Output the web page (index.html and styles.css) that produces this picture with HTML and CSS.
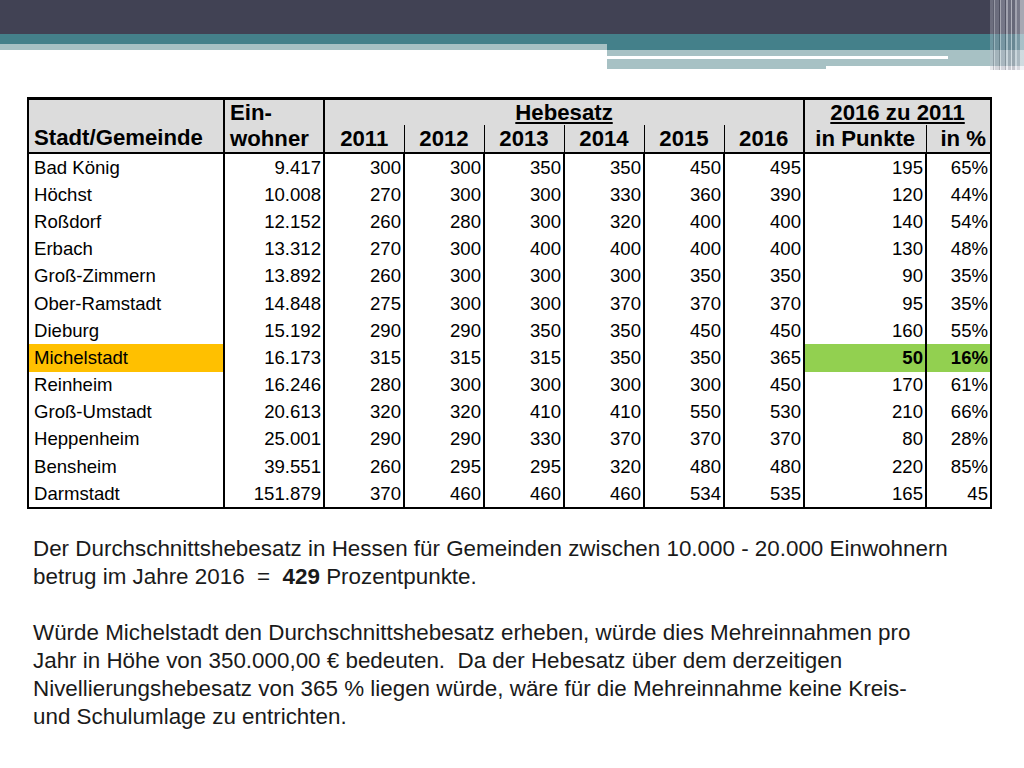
FILE: index.html
```html
<!DOCTYPE html>
<html lang="de">
<head>
<meta charset="utf-8">
<title>Hebesatz</title>
<link rel="stylesheet" href="styles.css">
</head>
<body>
<header class="deck">
  <div class="bar-dark"></div>
  <div class="band">
    <div class="band-left">
      <div class="teal short"></div>
      <div class="pale thin"></div>
    </div>
    <div class="band-right">
      <div class="teal tall"></div>
      <div class="pale p1"></div>
      <div class="line-row"><div class="white-line"></div></div>
      <div class="pale p2"></div>
      <div class="p3"></div>
    </div>
  </div>
  <div class="stripes"></div>
</header>

<main class="slide">
  <table class="rates">
    <colgroup>
      <col class="c-name"><col class="c-ew"><col class="c-y"><col class="c-y"><col class="c-y"><col class="c-y"><col class="c-y"><col class="c-y"><col class="c-pt"><col class="c-pc">
    </colgroup>
    <thead>
      <tr class="h1">
        <th rowspan="2" class="name-h">Stadt/Gemeinde</th>
        <th rowspan="2" class="ew-h">Ein-<br>wohner</th>
        <th colspan="6" class="grp"><span class="u">Hebesatz</span></th>
        <th colspan="2" class="grp"><span class="u">2016 zu 2011</span></th>
      </tr>
      <tr class="h2">
        <th class="yr first">2011</th><th class="yr">2012</th><th class="yr">2013</th><th class="yr">2014</th><th class="yr">2015</th><th class="yr">2016</th>
        <th class="yr first">in Punkte</th><th class="yr pc">in %</th>
      </tr>
    </thead>
    <tbody>
      <tr><td class="nm">Bad König</td><td>9.417</td><td>300</td><td>300</td><td>350</td><td>350</td><td>450</td><td>495</td><td>195</td><td>65%</td></tr>
      <tr><td class="nm">Höchst</td><td>10.008</td><td>270</td><td>300</td><td>300</td><td>330</td><td>360</td><td>390</td><td>120</td><td>44%</td></tr>
      <tr><td class="nm">Roßdorf</td><td>12.152</td><td>260</td><td>280</td><td>300</td><td>320</td><td>400</td><td>400</td><td>140</td><td>54%</td></tr>
      <tr><td class="nm">Erbach</td><td>13.312</td><td>270</td><td>300</td><td>400</td><td>400</td><td>400</td><td>400</td><td>130</td><td>48%</td></tr>
      <tr><td class="nm">Groß-Zimmern</td><td>13.892</td><td>260</td><td>300</td><td>300</td><td>300</td><td>350</td><td>350</td><td>90</td><td>35%</td></tr>
      <tr><td class="nm">Ober-Ramstadt</td><td>14.848</td><td>275</td><td>300</td><td>300</td><td>370</td><td>370</td><td>370</td><td>95</td><td>35%</td></tr>
      <tr><td class="nm">Dieburg</td><td>15.192</td><td>290</td><td>290</td><td>350</td><td>350</td><td>450</td><td>450</td><td>160</td><td>55%</td></tr>
      <tr class="hl"><td class="nm orange">Michelstadt</td><td>16.173</td><td>315</td><td>315</td><td>315</td><td>350</td><td>350</td><td>365</td><td class="green">50</td><td class="green">16%</td></tr>
      <tr><td class="nm">Reinheim</td><td>16.246</td><td>280</td><td>300</td><td>300</td><td>300</td><td>300</td><td>450</td><td>170</td><td>61%</td></tr>
      <tr><td class="nm">Groß-Umstadt</td><td>20.613</td><td>320</td><td>320</td><td>410</td><td>410</td><td>550</td><td>530</td><td>210</td><td>66%</td></tr>
      <tr><td class="nm">Heppenheim</td><td>25.001</td><td>290</td><td>290</td><td>330</td><td>370</td><td>370</td><td>370</td><td>80</td><td>28%</td></tr>
      <tr><td class="nm">Bensheim</td><td>39.551</td><td>260</td><td>295</td><td>295</td><td>320</td><td>480</td><td>480</td><td>220</td><td>85%</td></tr>
      <tr><td class="nm">Darmstadt</td><td>151.879</td><td>370</td><td>460</td><td>460</td><td>460</td><td>534</td><td>535</td><td>165</td><td>45</td></tr>
    </tbody>
  </table>

  <p class="note">Der Durchschnittshebesatz in Hessen für Gemeinden zwischen 10.000 - 20.000 Einwohnern<br>betrug im Jahre 2016 &nbsp;= &nbsp;<b>429</b> Prozentpunkte.</p>
  <p class="note">Würde Michelstadt den Durchschnittshebesatz erheben, würde dies Mehreinnahmen pro<br>Jahr in Höhe von 350.000,00 € bedeuten. &nbsp;Da der Hebesatz über dem derzeitigen<br>Nivellierungshebesatz von 365 % liegen würde, wäre für die Mehreinnahme keine Kreis-<br>und Schulumlage zu entrichten.</p>
</main>
</body>
</html>
```

FILE: styles.css
```css
html, body {
  margin: 0;
  padding: 0;
  background: #ffffff;
}
body {
  width: 1024px;
  height: 768px;
  overflow: hidden;
  font-family: "Liberation Sans", Arial, sans-serif;
  color: #000;
}

/* ---------- top decoration ---------- */
.deck {
  position: relative;
  height: 70px;
}
.bar-dark {
  height: 34px;
  background: #414254;
}
.band {
  display: flex;
}
.band-left {
  width: 607px;
}
.band-right {
  flex: 1;
}
.teal { background: #44808a; }
.teal.short { height: 10px; }
.teal.tall { height: 16px; }
.pale { background: #a7c1c4; }
.pale.thin { height: 6px; }
.pale.p1 { height: 6px; }
.line-row {
  height: 3px;
  background: #a7c1c4;
}
.white-line {
  width: 341px;
  height: 3px;
  background: #ffffff;
}
.pale.p2 { height: 7px; }
.p3 {
  width: 219px;
  height: 3px;
  background: #a7c1c4;
}
.stripes {
  position: absolute;
  top: 0;
  right: 0;
  width: 34px;
  height: 70px;
  background: linear-gradient(to right,
    rgba(190,192,204,0.35) 0px, rgba(190,192,204,0.35) 3px,
    rgba(120,122,136,0.5) 3px, rgba(120,122,136,0.5) 4px,
    rgba(220,222,230,0.55) 4px, rgba(220,222,230,0.55) 5px,
    rgba(160,162,176,0.45) 5px, rgba(160,162,176,0.45) 9px,
    rgba(90,92,106,0.45) 9px, rgba(90,92,106,0.45) 10px,
    rgba(230,232,238,0.6) 10px, rgba(230,232,238,0.6) 11px,
    rgba(170,172,186,0.5) 11px, rgba(170,172,186,0.5) 15px,
    rgba(100,102,116,0.5) 15px, rgba(100,102,116,0.5) 16px,
    rgba(225,227,235,0.6) 16px, rgba(225,227,235,0.6) 18px,
    rgba(150,152,166,0.5) 18px, rgba(150,152,166,0.5) 21px,
    rgba(235,236,242,0.65) 21px, rgba(235,236,242,0.65) 22px,
    rgba(140,142,156,0.5) 22px, rgba(140,142,156,0.5) 25px,
    rgba(225,227,235,0.6) 25px, rgba(225,227,235,0.6) 27px,
    rgba(175,177,190,0.5) 27px, rgba(175,177,190,0.5) 30px,
    rgba(235,236,242,0.6) 30px, rgba(235,236,242,0.6) 34px);
}

/* ---------- slide content ---------- */
.slide {
  padding: 27px 0 0 27px;
}
.rates {
  width: 965px;
  table-layout: fixed;
  border-collapse: collapse;
  border: 2px solid #000;
  border-top-width: 3px;
  font-size: 18.6px;
}
.c-name { width: 196px; }
.c-ew { width: 100px; }
.c-y { width: 80px; }
.c-pt { width: 122px; }
.c-pc { width: 65px; }

.rates th {
  background: #dcdcdc;
  font-weight: bold;
  font-size: 22.2px;
  padding: 0;
  white-space: nowrap;
}
.h1 th { height: 25px; }
.h2 th { height: 27px; }
.rates thead { border-bottom: 2px solid #000; }

.name-h {
  text-align: left;
  vertical-align: bottom;
  padding-left: 5px !important;
  line-height: 28px;
  border-right: 2px solid #000;
}
.ew-h {
  text-align: left;
  vertical-align: bottom;
  padding-left: 5px !important;
  line-height: 26px;
  border-right: 2px solid #000;
}
.grp {
  text-align: center;
  vertical-align: bottom;
  line-height: 24px;
  border-left: 2px solid #000;
}
.u {
  text-decoration: underline;
  text-decoration-thickness: 2px;
  text-underline-offset: 2px;
}
.yr {
  text-align: center;
  vertical-align: bottom;
  line-height: 26px;
  border-left: 1.5px solid #000;
}
.yr.first { border-left: 2px solid #000; }
.yr.pc { text-align: right; padding-right: 4px; }

.rates td {
  height: 27.2px;
  padding: 0 2px 0 0;
  text-align: right;
  vertical-align: middle;
  line-height: 20px;
  border-left: 2px solid #000;
  white-space: nowrap;
}
.rates td.nm {
  text-align: left;
  padding: 0 0 0 5px;
  border-left: none;
}
.orange { background: #ffc000; }
.green { background: #92d050; font-weight: bold; }

.note {
  margin: 26px 0 0 6px;
  font-size: 22.4px;
  line-height: 28px;
  color: #1a1a1a;
}
.note + .note {
  margin-top: 28px;
}
```
